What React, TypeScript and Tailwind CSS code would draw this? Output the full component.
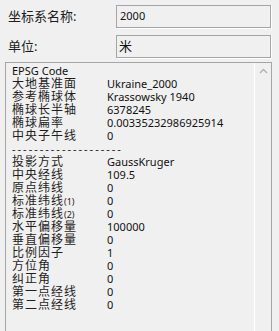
import React from "react";

const font = { fontFamily: '"Noto Sans", "Noto Sans CJK SC", sans-serif' };

const topRows: [string, string][] = [
  ["大地基准面", "Ukraine_2000"],
  ["参考椭球体", "Krassowsky 1940"],
  ["椭球长半轴", "6378245"],
  ["椭球扁率", "0.00335232986925914"],
  ["中央子午线", "0"],
];

const projRows: [React.ReactNode, string][] = [
  ["投影方式", "GaussKruger"],
  ["中央经线", "109.5"],
  ["原点纬线", "0"],
  [<>标准纬线<span className="text-[9px] tracking-normal">(1)</span></>, "0"],
  [<>标准纬线<span className="text-[9px] tracking-normal">(2)</span></>, "0"],
  ["水平偏移量", "100000"],
  ["垂直偏移量", "0"],
  ["比例因子", "1"],
  ["方位角", "0"],
  ["纠正角", "0"],
  ["第一点经线", "0"],
  ["第二点经线", "0"],
];

const Row = ({ label, value }: { label: React.ReactNode; value: string }) => (
  <div className="flex h-[13px] items-center">
    <div className="w-[95px] text-[12px] leading-[13px] tracking-[1px] text-[#1e1e1e]">{label}</div>
    <div className="text-[11px] leading-[13px] text-[#111]">{value}</div>
  </div>
);

const App: React.FC = () => {
  return (
    <div className="w-[279px] h-[331px] overflow-hidden bg-[#f0f0f0] px-[5px] pt-[5px]" style={font}>
      {/* name */}
      <div className="flex items-center">
        <div className="w-[111px] pl-[3px] text-[13px] text-[#1e1e1e]">坐标系名称:</div>
        <div className="flex h-[23px] w-[155px] items-center border border-[#a5a5a5] pl-[3px] text-[11px] text-[#111] shadow-[1px_1px_0_#fff]">
          2000
        </div>
      </div>

      {/* unit */}
      <div className="mt-[7px] flex items-center">
        <div className="w-[111px] pl-[3px] text-[13px] text-[#1e1e1e]">单位:</div>
        <div className="flex h-[23px] w-[155px] items-center border border-[#a5a5a5] pl-[2px] text-[13px] text-[#111] shadow-[1px_1px_0_#fff]">
          米
        </div>
      </div>

      {/* info box */}
      <div className="mt-[4px] flex h-[290px] w-[267px] border border-[#a5a5a5]">
        <div className="flex-1 pl-[6px] pt-[1px]">
          <div className="h-[13px] text-[11px] leading-[13px] text-[#111]">EPSG Code</div>
          {topRows.map(([l, v]) => (
            <Row key={l} label={l} value={v} />
          ))}
          <div className="h-[13px] text-[11px] leading-[13px] tracking-[2px] text-[#222]">--------------------</div>
          {projRows.map(([l, v], i) => (
            <Row key={i} label={l} value={v} />
          ))}
        </div>
        <div className="flex w-[17px] justify-center border-l border-white pt-[5px]">
          <svg width="9" height="6" viewBox="0 0 9 6">
            <path d="M1 5 L4.5 1.5 L8 5" fill="none" stroke="#b0b0b0" strokeWidth="1.3" />
          </svg>
        </div>
      </div>
    </div>
  );
};

export default App;
